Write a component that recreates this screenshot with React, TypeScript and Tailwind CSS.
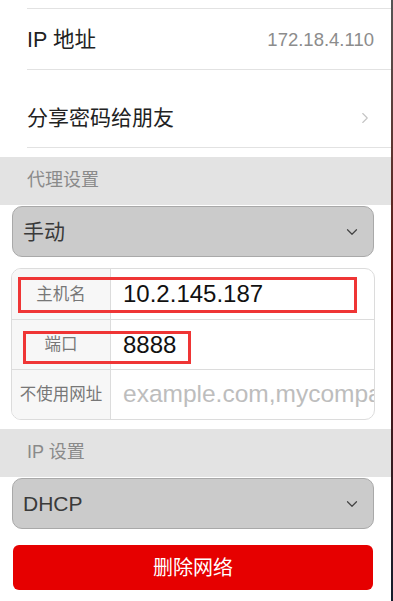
import { ChevronDown, ChevronRight } from 'lucide-react'

const font = "font-['Liberation_Sans','Noto_Sans_CJK_SC',sans-serif]"

function SelectBox({ value }: { value: string }) {
  return (
    <div className="ml-3 mr-[17px] flex h-[51px] items-center justify-between rounded-[10px] border border-[#a9a9a9] bg-[#cbcbcb] pl-[10px] pr-[12px]">
      <span className="text-[21px] text-[#3a3a3a]">{value}</span>
      <ChevronDown className="h-[18px] w-[18px] text-[#444]" strokeWidth={1.6} />
    </div>
  )
}

function SectionHeader({ title }: { title: string }) {
  return (
    <div className="flex h-[48px] items-center bg-[#e3e3e3] pb-[2px] pl-[27px] text-[18px] text-[#8a8a8a]">
      {title}
    </div>
  )
}

export default function App() {
  const rows = [
    { label: '主机名', value: '10.2.145.187', placeholder: false },
    { label: '端口', value: '8888', placeholder: false },
    { label: '不使用网址', value: 'example.com,mycompany.com', placeholder: true },
  ]

  return (
    <div className={`flex h-[601px] w-[393px] overflow-hidden bg-white ${font}`}>
      <div className="flex w-[391px] flex-col">
        {/* Wi-Fi detail rows */}
        <div className="pl-[27px] pt-[8px]">
          <div className="flex h-[61px] items-center justify-between border-t border-[#e2e2e2] pr-[17px] pt-[2px]">
            <span className="text-[21.5px] text-[#222]">IP 地址</span>
            <span className="text-[18.5px] text-[#8c8c8c]">172.18.4.110</span>
          </div>
          <div className="flex h-[79px] items-center justify-between border-y border-[#e2e2e2] pr-[17px] pt-[19px]">
            <span className="text-[21px] text-[#222]">分享密码给朋友</span>
            <ChevronRight className="h-[18px] w-[18px] text-[#c4c4c4]" strokeWidth={1.5} />
          </div>
        </div>

        <div className="mt-[9px]">
          <SectionHeader title="代理设置" />
        </div>
        <div className="mt-[1px]">
          <SelectBox value="手动" />
        </div>

        {/* Proxy table */}
        <div className="relative ml-[11px] mr-[16px] mt-[11px] overflow-hidden rounded-[10px] border border-[#dcdcdc]">
          {rows.map((row, i) => (
            <div key={row.label} className={`flex h-[50px] ${i > 0 ? 'border-t border-[#dcdcdc]' : ''}`}>
              <div className="flex w-[99px] shrink-0 items-center justify-center border-r border-[#dcdcdc] bg-[#f7f7f7] text-[16.5px] text-[#777]">
                {row.label}
              </div>
              <div
                className={`flex min-w-0 flex-1 items-center overflow-hidden whitespace-nowrap pl-[12px] ${
                  row.placeholder ? 'text-[24.5px] text-[#bdbdbd]' : 'text-[24px] text-[#111]'
                }`}
              >
                {row.value}
              </div>
            </div>
          ))}
          {/* annotation boxes */}
          <div className="absolute left-[6px] top-[8px] h-[36px] w-[339px] border-[3px] border-[#ef3535]" />
          <div className="absolute left-[11px] top-[62px] h-[33px] w-[168px] border-[3px] border-[#ef3535]" />
        </div>

        <div className="mt-[9px]">
          <SectionHeader title="IP 设置" />
        </div>
        <div className="mt-[1px]">
          <SelectBox value="DHCP" />
        </div>

        <div className="ml-[13px] mr-[18px] mt-[16px] flex h-[45px] items-center justify-center rounded-[6px] bg-[#e60000] text-[20px] text-white">
          删除网络
        </div>
      </div>
      <div className="w-[2px] bg-gradient-to-b from-[#555] via-[#5a0a0a] to-[#141c2c]" />
    </div>
  )
}
